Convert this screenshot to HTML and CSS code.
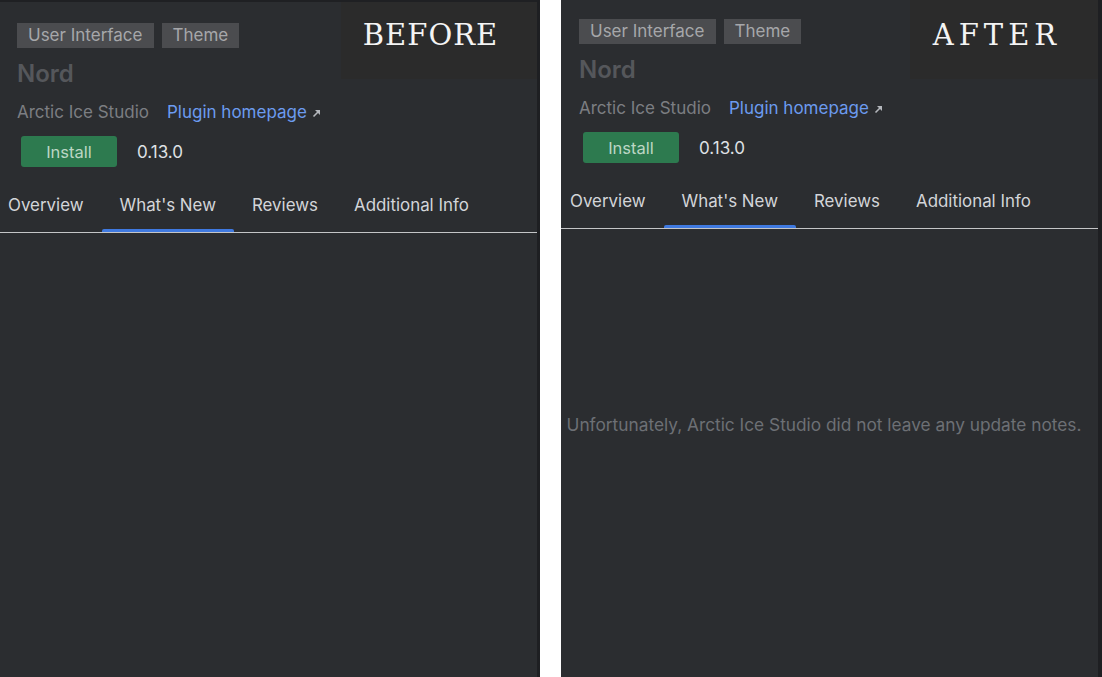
FILE: index.html
```html
<!DOCTYPE html>
<html lang="en">
<head>
<meta charset="utf-8">
<title>Nord plugin - Before / After</title>
<link rel="stylesheet" href="styles.css">
</head>
<body>
<div class="compare">
  <section class="panel panel-before">
    <div class="badge">BEFORE</div>
    <div class="header">
      <div class="tags">
        <span class="tag">User Interface</span>
        <span class="tag">Theme</span>
      </div>
      <h1 class="name">Nord</h1>
      <div class="meta">
        <span class="vendor">Arctic Ice Studio</span>
        <a class="link" href="#">Plugin homepage<svg class="arrow" width="9" height="9" viewBox="0 0 9 9"><path d="M1.5 7.5 L6.5 2.5" stroke="#b4b7bc" stroke-width="1.6"/><path d="M3 1 H8 V6 Z" fill="#b4b7bc"/></svg></a>
      </div>
      <div class="actions">
        <button class="install">Install</button>
        <span class="version">0.13.0</span>
      </div>
    </div>
    <nav class="tabs">
      <span class="tab">Overview</span>
      <span class="tab active">What's New</span>
      <span class="tab">Reviews</span>
      <span class="tab">Additional Info</span>
    </nav>
    <div class="content"></div>
  </section>
  <section class="panel panel-after">
    <div class="badge">AFTER</div>
    <div class="header">
      <div class="tags">
        <span class="tag">User Interface</span>
        <span class="tag">Theme</span>
      </div>
      <h1 class="name">Nord</h1>
      <div class="meta">
        <span class="vendor">Arctic Ice Studio</span>
        <a class="link" href="#">Plugin homepage<svg class="arrow" width="9" height="9" viewBox="0 0 9 9"><path d="M1.5 7.5 L6.5 2.5" stroke="#b4b7bc" stroke-width="1.6"/><path d="M3 1 H8 V6 Z" fill="#b4b7bc"/></svg></a>
      </div>
      <div class="actions">
        <button class="install">Install</button>
        <span class="version">0.13.0</span>
      </div>
    </div>
    <nav class="tabs">
      <span class="tab">Overview</span>
      <span class="tab active">What's New</span>
      <span class="tab">Reviews</span>
      <span class="tab">Additional Info</span>
    </nav>
    <div class="content">
      <p class="empty">Unfortunately, Arctic Ice Studio did not leave any update notes.</p>
    </div>
  </section>
</div>
</body>
</html>
```
FILE: styles.css
```css
* { box-sizing: border-box; }
html, body { margin: 0; padding: 0; }
body {
  background: #ffffff;
  font-family: Inter, "Noto Sans", sans-serif;
  width: 1102px;
  height: 677px;
  overflow: hidden;
}
.compare {
  display: flex;
  gap: 21px;
  height: 677px;
}
.panel {
  position: relative;
  background: #2b2d30;
  height: 677px;
  display: flex;
  flex-direction: column;
  overflow: hidden;
}
.panel-before {
  width: 540px;
  border-top: 2px solid #1f2023;
  border-right: 3px solid #1e1f22;
  padding-top: 21px;
}
.panel-after {
  width: 541px;
  border-right: 4px solid #1e1f22;
  padding-top: 19px;
}
.badge {
  position: absolute;
  top: 0;
  right: 0;
  width: 196px;
  height: 79px;
  background: #2b2b2b;
  color: #f4f4f4;
  font-family: "DejaVu Serif", "Liberation Serif", serif;
  font-size: 29px;
  letter-spacing: 1px;
  line-height: 36px;
  padding: 17px 17px 0 0;
  text-align: center;
}
.panel-before .badge { top: -2px; }
.panel-after .badge { width: 188px; letter-spacing: 5px; padding-right: 14px; }
.header { padding-left: 17px; }
.panel-after .header { padding-left: 18px; }
.tags { display: flex; gap: 8px; }
.tag {
  background: #4b4c4f;
  color: #a6a7aa;
  font-size: 17px;
  height: 25px;
  line-height: 25px;
  padding: 0 11px;
}
.name {
  margin: 11px 0 0;
  font-size: 24px;
  font-weight: 600;
  line-height: 30px;
  color: #55575b;
}
.meta {
  margin-top: 12px;
  display: flex;
  gap: 18px;
  font-size: 17px;
  line-height: 22px;
  height: 22px;
}
.vendor { color: #7c7e82; }
.link {
  color: #6c9bef;
  text-decoration: none;
  display: inline-flex;
  align-items: center;
  gap: 5px;
}
.arrow { margin-top: 2px; }
.actions {
  margin-top: 13px;
  margin-left: 4px;
  display: flex;
  align-items: center;
  gap: 20px;
}
.install {
  width: 96px;
  height: 31px;
  border: none;
  border-radius: 3px;
  background: #2d7a4f;
  color: #bcd6c4;
  font-family: Inter, "Noto Sans", sans-serif;
  font-size: 16.5px;
  padding: 0;
}
.version { color: #dfe1e5; font-size: 17px; }
.tabs {
  display: flex;
  margin-top: 14px;
  border-bottom: 1px solid #c4c5c7;
}
.tab {
  position: relative;
  padding: 14px 18px 0;
  height: 51px;
  font-size: 16.9px;
  line-height: 20px;
  color: #d3d5d9;
}
.tab:first-child { padding-left: 8px; }
.panel-after .tab:first-child { padding-left: 9px; }
.tab.active::after {
  content: "";
  position: absolute;
  left: 0;
  right: 0;
  bottom: 0;
  height: 3px;
  background: #3f79e0;
  border-radius: 2px 2px 0 0;
}
.content {
  flex: 1;
  padding: 186px 11px 0 0;
  text-align: center;
}
.empty {
  margin: 0;
  font-size: 17.3px;
  line-height: 20px;
  color: #6d7075;
}
```
